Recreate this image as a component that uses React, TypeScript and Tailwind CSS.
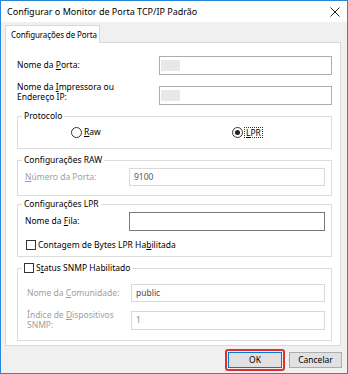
import React from "react";

const font = { fontFamily: '"Noto Sans", "Open Sans", sans-serif' };

function Group({ label, children, className }: { label: React.ReactNode; children: React.ReactNode; className?: string }) {
  return (
    <div className={"relative border border-[#dcdcdc] " + (className ?? "")}>
      <div className="absolute left-[4px] top-[-7px] bg-white px-[2px] leading-[12px] text-[#000]">{label}</div>
      {children}
    </div>
  );
}

function Radio({ checked }: { checked?: boolean }) {
  return (
    <span className="flex h-[11px] w-[11px] items-center justify-center rounded-full border border-[#333] bg-white">
      {checked ? <span className="h-[5px] w-[5px] rounded-full bg-[#222]" /> : null}
    </span>
  );
}

function Check() {
  return <span className="block h-[10px] w-[10px] border border-[#333] bg-white" />;
}

export default function App() {
  return (
    <div style={font} className="flex h-[374px] w-[348px] flex-col border border-[#2a86d6] bg-[#f0f0f0] text-[8.5px] text-black">
      {/* title bar */}
      <div className="flex h-[21px] items-center justify-between bg-white pl-[6px] pr-[6px]">
        <span className="whitespace-nowrap text-[9px] leading-none">Configurar o Monitor de Porta TCP/IP Padrão</span>
        <svg width="10" height="10" viewBox="0 0 10 10" className="mr-[1px]">
          <path d="M0.5 0.5 L9.5 9.5 M9.5 0.5 L0.5 9.5" stroke="#222" strokeWidth="1" fill="none" />
        </svg>
      </div>

      {/* tab */}
      <div className="ml-[4px] mt-[3px] flex">
        <div className="relative z-10 -mb-px flex h-[18px] w-[95px] shrink-0 items-center overflow-hidden whitespace-nowrap border border-b-0 border-[#d9d9d9] bg-white pl-[5px] text-[8px] tracking-[-0.1px]">
          Configurações de Porta
        </div>
      </div>

      {/* panel */}
      <div className="ml-[4px] flex h-[304px] w-[336px] flex-col border border-[#d9d9d9] bg-white pl-[11px] pr-[8px]">
        {/* row 1 */}
        <div className="mt-[13px] flex items-center">
          <span className="flex-1">
            Nome da <u className="underline-offset-1">P</u>orta:
          </span>
          <div className="flex h-[19px] w-[173px] items-center border border-[#adadad] pl-[1px]">
            <span className="block h-[11px] w-[19px] bg-[#e8e8e8]" />
          </div>
        </div>
        {/* row 2 */}
        <div className="mt-[7px] flex items-center">
          <span className="mb-[6px] flex-1 leading-[10px]">
            Nome da <u>I</u>mpressora ou
            <br />
            Endereço IP:
          </span>
          <div className="flex h-[19px] w-[173px] items-center border border-[#adadad] pl-[1px]">
            <span className="block h-[11px] w-[19px] bg-[#e8e8e8]" />
          </div>
        </div>

        {/* Protocolo */}
        <Group label="Protocolo" className="mt-[8px] h-[33px]">
          <div className="flex h-full items-center">
            <div className="flex w-[157px] items-center gap-[2px] pl-[53px]">
              <Radio />
              <span>
                <u>R</u>aw
              </span>
            </div>
            <div className="flex items-center gap-[1px] pl-[57px]">
              <Radio checked />
              <span className="border border-dotted border-[#333] px-[1px] leading-[9px]">
                <u>L</u>PR
              </span>
            </div>
          </div>
        </Group>

        {/* RAW */}
        <Group label="Configurações RAW" className="mt-[11px] h-[36px]">
          <div className="flex items-center pl-[7px] pr-[6px] pt-[7px]">
            <span className="flex-1 text-[#a0a0a0]">
              <u>N</u>úmero da Porta:
            </span>
            <div className="flex h-[18px] w-[196px] items-center border border-[#d9d9d9] pl-[4px] text-[#5a5a5a]">9100</div>
          </div>
        </Group>

        {/* LPR */}
        <Group label="Configurações LPR" className="mt-[8px] h-[53px]">
          <div className="flex items-center pl-[7px] pr-[6px] pt-[7px]">
            <span className="flex-1">
              Nome da <u>F</u>ila:
            </span>
            <div className="h-[19px] w-[196px] border border-[#7a7a7a]" />
          </div>
          <div className="mt-[9px] flex items-center gap-[2px] pl-[8px]">
            <Check />
            <span className="leading-[10px]">
              Contagem de Bytes LPR Ha<u>b</u>ilitada
            </span>
          </div>
        </Group>

        {/* SNMP */}
        <Group
          label={
            <span className="flex items-center gap-[2px]">
              <Check />
              <span>
                S<u>t</u>atus SNMP Habilitado
              </span>
            </span>
          }
          className="mt-[11px] h-[73px]"
        >
          <div className="flex items-center pl-[9px] pr-[6px] pt-[15px]">
            <span className="flex-1 text-[#a0a0a0]">
              Nome da <u>C</u>omunidade:
            </span>
            <div className="flex h-[18px] w-[194px] items-center border border-[#d9d9d9] pl-[4px] text-[#4a4a4a]">public</div>
          </div>
          <div className="mt-[8px] flex items-center pl-[9px] pr-[6px]">
            <span className="flex-1 leading-[10px] text-[#a0a0a0]">
              Índice de <u>D</u>ispositivos
              <br />
              SNMP:
            </span>
            <div className="flex h-[19px] w-[194px] items-center border border-[#d9d9d9] pl-[4px] text-[#8a8a8a]">1</div>
          </div>
        </Group>
      </div>

      {/* buttons */}
      <div className="mt-[3px] flex items-center justify-end gap-[4px] pr-[5px]">
        <div className="rounded-[3px] border-2 border-[#e0302e] p-[1px]">
          <div className="flex h-[16px] w-[54px] items-center justify-center border border-[#0078d7] bg-[#e1e1e1]">OK</div>
        </div>
        <div className="flex h-[16px] w-[53px] items-center justify-center border border-[#adadad] bg-[#e1e1e1]">Cancelar</div>
      </div>
    </div>
  );
}
